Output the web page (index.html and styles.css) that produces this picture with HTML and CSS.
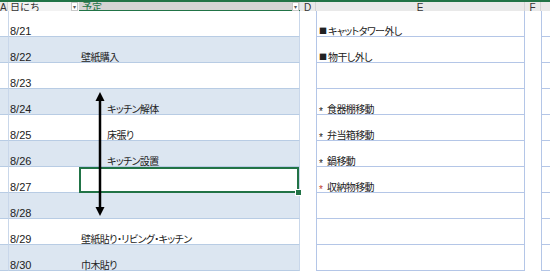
FILE: index.html
```html
<!DOCTYPE html>
<html lang="ja">
<head>
    <meta charset="UTF-8">
    <title>予定表</title>
    <link rel="stylesheet" href="styles.css">
</head>
<body>

<div class="ribbon-edge"></div>

<div class="sheet">
    <div class="head">
        <div class="hd col-a">A</div>
        <div class="hd th">日にち<span class="filter">▾</span></div>
        <div class="hd th picked">予定<span class="filter">▾</span></div>
        <div class="hd col-d">D</div>
        <div class="hd col-e">E</div>
        <div class="hd col-f">F</div>
        <div class="hd col-g"></div>
    </div>

    <div class="row">
        <div class="a"></div><div class="date">8/21</div><div class="plan"></div>
        <div class="d"></div><div class="e"><span class="sq">■</span>キャットタワー外し</div><div class="f"></div><div class="g"></div>
    </div>
    <div class="row band">
        <div class="a"></div><div class="date">8/22</div><div class="plan">壁紙購入</div>
        <div class="d"></div><div class="e"><span class="sq">■</span>物干し外し</div><div class="f"></div><div class="g"></div>
    </div>
    <div class="row">
        <div class="a"></div><div class="date">8/23</div><div class="plan"></div>
        <div class="d"></div><div class="e"></div><div class="f"></div><div class="g"></div>
    </div>
    <div class="row band">
        <div class="a"></div><div class="date">8/24</div><div class="plan indent">キッチン解体</div>
        <div class="d"></div><div class="e"><span class="mark">*</span>食器棚移動</div><div class="f"></div><div class="g"></div>
    </div>
    <div class="row">
        <div class="a"></div><div class="date">8/25</div><div class="plan indent">床張り</div>
        <div class="d"></div><div class="e"><span class="mark">*</span>弁当箱移動</div><div class="f"></div><div class="g"></div>
    </div>
    <div class="row band">
        <div class="a"></div><div class="date">8/26</div><div class="plan indent">キッチン設置</div>
        <div class="d"></div><div class="e"><span class="mark">*</span>鍋移動</div><div class="f"></div><div class="g"></div>
    </div>
    <div class="row">
        <div class="a"></div><div class="date">8/27</div><div class="plan selected"></div>
        <div class="d"></div><div class="e"><span class="mark red">*</span>収納物移動</div><div class="f"></div><div class="g"></div>
    </div>
    <div class="row band">
        <div class="a"></div><div class="date">8/28</div><div class="plan"></div>
        <div class="d"></div><div class="e"></div><div class="f"></div><div class="g"></div>
    </div>
    <div class="row">
        <div class="a"></div><div class="date">8/29</div><div class="plan">壁紙貼り・リビング・キッチン</div>
        <div class="d"></div><div class="e"></div><div class="f"></div><div class="g"></div>
    </div>
    <div class="row band">
        <div class="a"></div><div class="date">8/30</div><div class="plan">巾木貼り</div>
        <div class="d"></div><div class="e"></div><div class="f"></div><div class="g"></div>
    </div>

    <!-- 矢印（8/23〜8/28） -->
    <svg class="arrow" width="12" height="124" viewBox="0 0 12 124">
        <line x1="6" y1="8" x2="6" y2="116" stroke="#000" stroke-width="2.5"/>
        <polygon points="6,0 1.5,9 10.5,9" fill="#000"/>
        <polygon points="6,124 1.5,115 10.5,115" fill="#000"/>
    </svg>
</div>

</body>
</html>
```

FILE: styles.css
```css
body {
    margin: 0;
    background-color: #fff;
    font-family: "Liberation Sans", "Noto Sans CJK JP", sans-serif;
    color: #222;
    width: 550px;
    height: 271px;
    overflow: hidden;
}
.ribbon-edge {
    height: 2px;
    background-color: #217346;
}
.sheet {
    position: relative;
}
.head,
.row {
    display: grid;
    grid-template-columns: 8px 71px 221px 16px 209px 16px 9px;
}
.head {
    height: 9px;
    background-color: #e9e9e9;
    overflow: hidden;
}
.hd {
    font-size: 10px;
    line-height: 11px;
    height: 9px;
    color: #333;
    text-align: center;
    position: relative;
}
.col-a {
    text-align: left;
    border-right: 1px solid #d4d4d4;
}
.th {
    font-family: "Noto Sans CJK JP", sans-serif;
    font-size: 10px;
    line-height: 10px;
    text-align: left;
    padding-left: 2px;
    background-color: #f2f2f2;
}
.th.picked {
    background-color: #d4d4d4;
    color: #217346;
    padding-left: 3px;
    border-bottom: 1px solid #217346;
    box-sizing: border-box;
}
.filter {
    position: absolute;
    right: 1px;
    top: 0;
    width: 7px;
    height: 9px;
    background-color: #fff;
    border: 1px solid #c8c8c8;
    box-sizing: border-box;
    font-size: 6px;
    line-height: 8px;
    text-align: center;
    color: #555;
}
.col-d,
.col-e,
.col-f {
    border-right: 1px solid #d4d4d4;
}
.row {
    height: 26px;
}
.row > div {
    box-sizing: border-box;
    display: flex;
    align-items: flex-end;
    padding-bottom: 0;
    white-space: nowrap;
}
.a,
.date,
.plan {
    border-bottom: 1px solid #b8cce4;
}
.date {
    border-left: 1px solid #c9d7ea;
    padding-left: 1px;
    font-size: 11px;
    line-height: 10px;
}
.plan {
    border-right: 1px solid #c9d7ea;
    padding-left: 2px;
    font-family: "Noto Sans CJK JP", sans-serif;
    font-feature-settings: "palt";
    font-size: 10px;
    line-height: 11px;
    letter-spacing: -0.6px;
}
.plan.indent {
    padding-left: 28px;
}
.band .a,
.band .date,
.band .plan {
    background-color: #dce6f1;
}
.plan.selected {
    position: relative;
    box-shadow: inset 0 0 0 2px #217346;
    border-bottom: none;
}
.plan.selected::after {
    content: "";
    position: absolute;
    right: -3px;
    bottom: -3px;
    width: 5px;
    height: 5px;
    background-color: #217346;
    border: 1px solid #fff;
}
.e {
    border-left: 1px solid #b4c6e7;
    border-right: 1px solid #b4c6e7;
    border-bottom: 1px solid #b4c6e7;
    padding-left: 2px;
    font-family: "Noto Sans CJK JP", sans-serif;
    font-feature-settings: "palt";
    font-size: 10px;
    line-height: 11px;
    letter-spacing: -0.6px;
}
.sq {
    font-size: 8px;
    width: 9px;
    line-height: 11px;
    letter-spacing: 0;
}
.mark {
    font-family: "Liberation Sans", sans-serif;
    font-size: 10px;
    width: 8px;
    line-height: 11px;
    letter-spacing: 0;
    transform: translateY(3px);
}
.mark.red {
    color: #c0392b;
}
.g {
    border-left: 1px solid #b4c6e7;
    border-bottom: 1px solid #b4c6e7;
}
.arrow {
    position: absolute;
    left: 94px;
    top: 90px;
}
```
